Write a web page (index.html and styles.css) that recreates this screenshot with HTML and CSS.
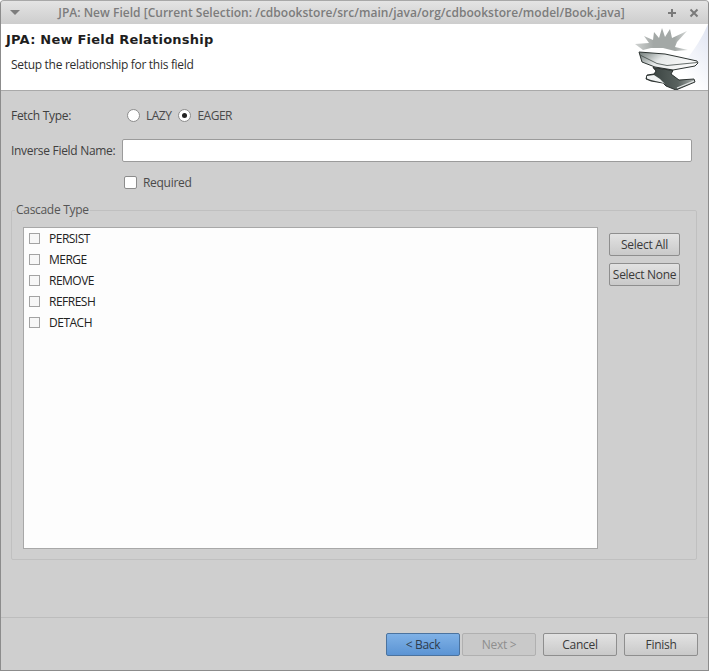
FILE: index.html
```html
<!DOCTYPE html>
<html lang="en">
<head>
<meta charset="utf-8">
<title>JPA: New Field</title>
<link rel="stylesheet" href="styles.css">
</head>
<body>
<div class="window">
  <div class="titlebar">
    <svg class="menu-arrow" width="10" height="6" viewBox="0 0 10 6"><path d="M0 0H10L5 5Z" fill="#7d7d7d"/></svg>
    <div class="title">JPA: New Field [Current Selection: /cdbookstore/src/main/java/org/cdbookstore/model/Book.java]</div>
    <div class="win-btns">
      <svg width="10" height="10" viewBox="0 0 10 10"><path d="M5 1V9M1 5H9" stroke="#7a7a7a" stroke-width="2"/></svg>
      <svg width="10" height="10" viewBox="0 0 10 10"><path d="M1.5 1.5L8.5 8.5M8.5 1.5L1.5 8.5" stroke="#7a7a7a" stroke-width="2"/></svg>
    </div>
  </div>
  <div class="banner">
    <div class="banner-text">
      <h1>JPA: New Field Relationship</h1>
      <p>Setup the relationship for this field</p>
    </div>
    <svg class="anvil" width="75" height="66" viewBox="0 0 75 66">
      <defs>
        <linearGradient id="bg" x1="0" y1="1" x2="1" y2="0"><stop offset="0.4" stop-color="#fff"/><stop offset="1" stop-color="#dfe4f2"/></linearGradient>
        <linearGradient id="horn" x1="0" y1="0" x2="1" y2="0.4"><stop offset="0" stop-color="#6f7976"/><stop offset="0.45" stop-color="#e6e9e9"/><stop offset="1" stop-color="#fafafa"/></linearGradient>
        <linearGradient id="waist" x1="0" y1="0" x2="1" y2="0"><stop offset="0" stop-color="#333c3a"/><stop offset="0.65" stop-color="#59625f"/><stop offset="1" stop-color="#a9afad"/></linearGradient>
        <linearGradient id="spark" x1="0" y1="0" x2="1" y2="0"><stop offset="0" stop-color="#d0d3d2"/><stop offset="0.35" stop-color="#a3a8a6"/><stop offset="0.75" stop-color="#a3a8a6"/><stop offset="1" stop-color="#d8dbda"/></linearGradient>
      </defs>
      <path d="M75 0V66H20C44 50 64 26 75 0Z" fill="url(#bg)"/>
      <path d="M2 20L16 19L11 12L20 16L21 8L26 14L29 4L32 13L37 5L39 14L54 7L44 18L42 23L55 26L42 27L30 24L18 24L10 26Z" fill="url(#spark)"/>
      <path d="M6 28L32 30L46 33L64 37L65 39L62 42L40 46L22 43L9 38Z" fill="url(#horn)" stroke="#2d3432" stroke-width="1" stroke-linejoin="round"/>
      <path d="M7 31L24 39.500L34 41.500L64 38.500" fill="none" stroke="#3f4745" stroke-width="0.8"/>
      <path d="M20 43.500L40 46.500L38 50L46 56L61 55L62 58L43 66L33 62L30 59L18 57L13 55L14 51L21 50L23 47Z" fill="url(#waist)" stroke="#1e2423" stroke-width="0.9" stroke-linejoin="round"/>
      <path d="M14 52L21 51L27 55L32 60L29 58.500L18 56L14 54.500Z" fill="#f1f3f3"/>
      <path d="M44 64L61 57" stroke="#e4e7e7" stroke-width="1.2"/>
    </svg>
  </div>
  <div class="content">
    <div class="row fetch-row">
      <span class="label">Fetch Type:</span>
      <label class="choice"><span class="radio"></span>LAZY</label>
      <label class="choice"><span class="radio checked"></span>EAGER</label>
    </div>
    <div class="row name-row">
      <span class="label">Inverse Field Name:</span>
      <div class="input"></div>
    </div>
    <label class="required"><span class="check"></span>Required</label>
    <fieldset class="group">
      <legend>Cascade Type</legend>
      <div class="list">
        <div class="item"><span class="item-box"></span>PERSIST</div>
        <div class="item"><span class="item-box"></span>MERGE</div>
        <div class="item"><span class="item-box"></span>REMOVE</div>
        <div class="item"><span class="item-box"></span>REFRESH</div>
        <div class="item"><span class="item-box"></span>DETACH</div>
      </div>
      <div class="side-btns">
        <button class="btn small">Select All</button>
        <button class="btn small">Select None</button>
      </div>
    </fieldset>
  </div>
  <div class="footer">
    <button class="btn wide primary">&lt; Back</button>
    <button class="btn wide disabled">Next &gt;</button>
    <button class="btn wide cancel">Cancel</button>
    <button class="btn wide">Finish</button>
  </div>
</div>
</body>
</html>
```
FILE: styles.css
```css
* { box-sizing: border-box; }
html, body { margin: 0; height: 100%; }
body { background: #fff; font-family: "Open Sans", sans-serif; font-size: 12px; letter-spacing: -0.3px; color: #3c3c3c; }
.window {
  width: 709px; height: 671px; display: flex; flex-direction: column;
  border: 1px solid #8c8c8c; border-top-color: #a8a8a8; border-radius: 4px 4px 0 0;
  background: #cfcfcf; overflow: hidden;
}
.titlebar {
  height: 23px; flex: none; display: flex; align-items: center; padding: 0 9px;
  background: linear-gradient(#e4e4e4, #cdcdcd);
}
.menu-arrow { flex: none; margin-top: 1px; }
.title { flex: 1; text-align: center; font-weight: 600; font-size: 12px; letter-spacing: 0.02px; color: #7c7c7c; white-space: nowrap; margin-right: 4px; }
.win-btns { display: flex; gap: 12px; flex: none; }
.banner {
  height: 67px; flex: none; display: flex; justify-content: space-between;
  background: #fff; border-bottom: 1px solid #a9a9a9;
}
.banner-text { padding: 7px 0 0 5px; }
h1 { margin: 0; font: bold 13px/18px "DejaVu Sans", sans-serif; color: #1e1e1e; letter-spacing: 0.22px; }
p { margin: 7px 0 0 5px; font-size: 12px; line-height: 17px; color: #2e2e2e; }
.anvil { flex: none; display: block; }
.content { flex: 1; padding: 0 10px; display: flex; flex-direction: column; }
.row { display: flex; align-items: center; }
.fetch-row { margin-top: 16px; height: 17px; }
.label { color: #404040; }
.fetch-row .label { width: 116px; }
.choice { display: flex; align-items: center; margin-right: 7px; color: #4a4a4a; letter-spacing: -0.5px; }
.radio {
  width: 13px; height: 13px; border-radius: 50%; border: 1px solid #8c8c8c; background: #fff;
  margin-right: 6px; display: flex; align-items: center; justify-content: center;
}
.radio.checked::after { content: ""; width: 5px; height: 5px; border-radius: 50%; background: #222; }
.name-row { margin-top: 14px; height: 24px; }
.name-row .label { width: 111px; white-space: nowrap; }
.input { width: 570px; height: 23px; border: 1px solid #9b9b9b; border-radius: 2px; background: #fff; }
.required { display: flex; align-items: center; margin: 11px 0 0 113px; height: 18px; color: #4a4a4a; }
.check { width: 13px; height: 13px; border: 1px solid #8c8c8c; border-radius: 2px; background: #fff; margin-right: 6px; }
.group {
  margin: 11px 0 0 0; padding: 9px 11px 10px 11px; width: 686px; height: 358px;
  border: 1px solid #c0c0c0; border-radius: 2px; display: flex; align-items: flex-start; min-width: 0;
}
legend { padding: 0 1px; margin-left: -8px; color: #555; line-height: 16px; }
.list { width: 575px; height: 322px; background: #fdfdfd; border: 1px solid #a8a8a8; flex: none; }
.item { height: 21px; display: flex; align-items: center; padding-left: 5px; color: #222; letter-spacing: -0.5px; }
.item-box { width: 11px; height: 11px; border: 1px solid #a3a3a3; background: #f7f7f7; margin-right: 9px; }
.side-btns { margin: 6px 0 0 11px; display: flex; flex-direction: column; gap: 7px; }
.btn {
  font: 12px "Open Sans", sans-serif; letter-spacing: -0.3px; color: #3a3a3a; height: 23px; padding: 0; white-space: nowrap;
  border: 1px solid #8e8e8e; border-radius: 2px; background: linear-gradient(#e2e2e2, #c9c9c9);
}
.small { width: 71px; }
.footer {
  height: 53px; flex: none; border-top: 1px solid #bdbdbd; display: flex; align-items: flex-start;
  padding: 15px 10px 0 0; justify-content: flex-end; gap: 7px;
}
.wide { width: 74px; }
.primary { background: linear-gradient(#7fb1e6, #5b94d4); border-color: #4b739f; color: #2e3d4e; margin-right: -5px; }
.disabled { background: #c9c9c9; border-color: #b0b0b0; color: #8e8e8e; }
```
